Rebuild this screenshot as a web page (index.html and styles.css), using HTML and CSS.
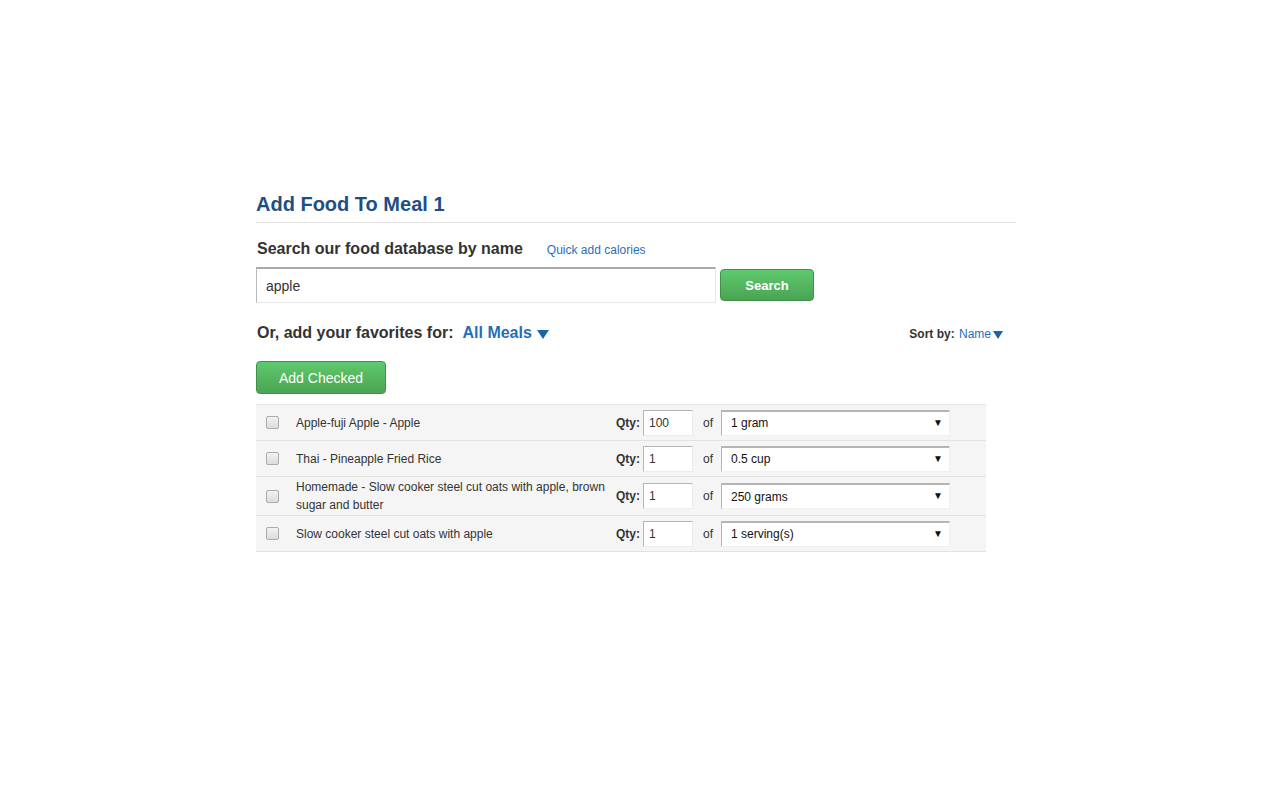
FILE: index.html
```html
<!DOCTYPE html>
<html lang="en">
<head>
<meta charset="utf-8">
<title>Add Food To Meal 1</title>
<link rel="stylesheet" href="styles.css">
</head>
<body>
<main class="page">
  <h1 class="title">Add Food To Meal 1</h1>

  <div class="search-head">
    <h2 class="subhead">Search our food database by name</h2>
    <a class="quick-link" href="#">Quick add calories</a>
  </div>

  <form class="search-form">
    <input class="search-input" type="text" value="apple">
    <button class="btn btn-search" type="button">Search</button>
  </form>

  <div class="fav-head">
    <h2 class="subhead">Or, add your favorites for:</h2>
    <a class="meal-link" href="#">All Meals<svg class="tri-big" width="12" height="9" viewBox="0 0 12 9"><path d="M0 0H12L6 9Z" fill="#1c64a6"/></svg></a>
    <div class="sort">
      <span class="sort-label">Sort by:</span>
      <a class="sort-link" href="#">Name<svg class="tri-small" width="10" height="8" viewBox="0 0 10 8"><path d="M0 0H10L5 8Z" fill="#1c64a6"/></svg></a>
    </div>
  </div>

  <button class="btn btn-add" type="button">Add Checked</button>

  <div class="food-list">
    <div class="food-row">
      <input class="check" type="checkbox">
      <div class="food-name">Apple-fuji Apple - Apple</div>
      <label class="qty-label">Qty:</label>
      <input class="qty-input" type="text" value="100">
      <span class="of">of</span>
      <div class="select-wrap"><select class="unit"><option>1 gram</option></select></div>
    </div>
    <div class="food-row">
      <input class="check" type="checkbox">
      <div class="food-name">Thai - Pineapple Fried Rice</div>
      <label class="qty-label">Qty:</label>
      <input class="qty-input" type="text" value="1">
      <span class="of">of</span>
      <div class="select-wrap"><select class="unit"><option>0.5 cup</option></select></div>
    </div>
    <div class="food-row">
      <input class="check" type="checkbox">
      <div class="food-name">Homemade - Slow cooker steel cut oats with apple, brown sugar and butter</div>
      <label class="qty-label">Qty:</label>
      <input class="qty-input" type="text" value="1">
      <span class="of">of</span>
      <div class="select-wrap"><select class="unit"><option>250 grams</option></select></div>
    </div>
    <div class="food-row">
      <input class="check" type="checkbox">
      <div class="food-name">Slow cooker steel cut oats with apple</div>
      <label class="qty-label">Qty:</label>
      <input class="qty-input" type="text" value="1">
      <span class="of">of</span>
      <div class="select-wrap"><select class="unit"><option>1 serving(s)</option></select></div>
    </div>
  </div>
</main>
</body>
</html>
```

FILE: styles.css
```css
* { box-sizing: border-box; }

html, body {
  margin: 0;
  padding: 0;
  background: #ffffff;
}

body {
  font-family: "Liberation Sans", Arial, sans-serif;
  color: #333333;
  padding-top: 192px;
}

.page {
  width: 768px;
  margin: 0 auto;
}

.title {
  margin: 0 8px 0 0;
  font-size: 20px;
  line-height: 24px;
  font-weight: bold;
  color: #1d4f83;
  padding-bottom: 6px;
  border-bottom: 1px solid #e3e3e3;
}

.search-head {
  display: flex;
  align-items: baseline;
  margin-top: 16px;
  padding-left: 1px;
}

.subhead {
  margin: 0;
  font-size: 16px;
  line-height: 20px;
  font-weight: bold;
  color: #333333;
}

.quick-link {
  margin-left: 24px;
  font-size: 12px;
  color: #1f6fb8;
  text-decoration: none;
}

.search-form {
  display: flex;
  align-items: center;
  gap: 4px;
  margin: 8px 0 0;
}

.search-input {
  width: 460px;
  height: 36px;
  padding: 0 9px;
  font-family: "Liberation Sans", Arial, sans-serif;
  font-size: 14px;
  color: #333333;
  border: 1px solid #e6e6e6;
  border-top: 2px solid #a9a9a9;
  border-left: 1px solid #b8b8b8;
  outline: none;
}

.btn {
  font-family: "Liberation Sans", Arial, sans-serif;
  color: #ffffff;
  border: 1px solid #3f9147;
  border-radius: 4px;
  background: linear-gradient(to bottom, #5fc96d 0%, #4aa453 100%);
  cursor: pointer;
  padding: 0;
}

.btn-search {
  width: 94px;
  height: 32px;
  font-size: 13px;
  font-weight: bold;
}

.fav-head {
  display: flex;
  align-items: baseline;
  margin-top: 20px;
  padding-left: 1px;
  padding-right: 21px;
}

.meal-link {
  margin-left: 9px;
  font-size: 16px;
  line-height: 20px;
  font-weight: bold;
  color: #1f6fb8;
  text-decoration: none;
}

.tri-big {
  margin-left: 5px;
  vertical-align: -1px;
}

.sort {
  margin-left: auto;
  font-size: 12px;
}

.sort-label {
  font-weight: bold;
  color: #333333;
}

.sort-link {
  color: #1f6fb8;
  text-decoration: none;
  margin-left: 1px;
}

.tri-small {
  margin-left: 2px;
  vertical-align: -1px;
}

.btn-add {
  display: block;
  margin-top: 18px;
  width: 130px;
  height: 33px;
  font-size: 14px;
}

.food-list {
  margin-top: 10px;
  width: 730px;
  border-top: 1px solid #e6e6e6;
}

.food-row {
  display: flex;
  align-items: center;
  min-height: 36px;
  padding: 1px 36px 1px 10px;
  background: #f5f5f5;
  border-bottom: 1px solid #e2e2e2;
  font-size: 12px;
}

.check {
  appearance: none;
  -webkit-appearance: none;
  width: 13px;
  height: 13px;
  margin: 0 17px 0 0;
  border: 1px solid #ababab;
  border-radius: 2px;
  background: linear-gradient(to bottom, #f2f2f2, #dcdcdc);
  flex: none;
}

.food-name {
  width: 310px;
  line-height: 18px;
  color: #333333;
  flex: none;
}

.qty-label {
  margin-left: 10px;
  font-weight: bold;
  color: #333333;
}

.qty-input {
  width: 50px;
  height: 26px;
  margin-left: 3px;
  padding: 0 5px;
  font-family: "Liberation Sans", Arial, sans-serif;
  font-size: 12px;
  color: #333333;
  background: #ffffff;
  border: 1px solid #ececec;
  border-top: 1px solid #b5b5b5;
  border-left: 1px solid #b5b5b5;
  outline: none;
}

.of {
  margin-left: 10px;
  color: #333333;
}

.select-wrap {
  position: relative;
  margin-left: 8px;
}

.select-wrap::after {
  content: "▼";
  position: absolute;
  right: 7px;
  top: 7px;
  font-size: 10px;
  color: #111111;
  pointer-events: none;
}

.unit {
  appearance: none;
  -webkit-appearance: none;
  width: 229px;
  height: 26px;
  padding: 0 9px;
  font-family: "Liberation Sans", Arial, sans-serif;
  font-size: 12px;
  color: #111111;
  background: #ffffff;
  border: 1px solid #f0f0f0;
  border-top: 2px solid #b5b5b5;
  border-left: 1px solid #b5b5b5;
  border-radius: 0;
  outline: none;
}
```
